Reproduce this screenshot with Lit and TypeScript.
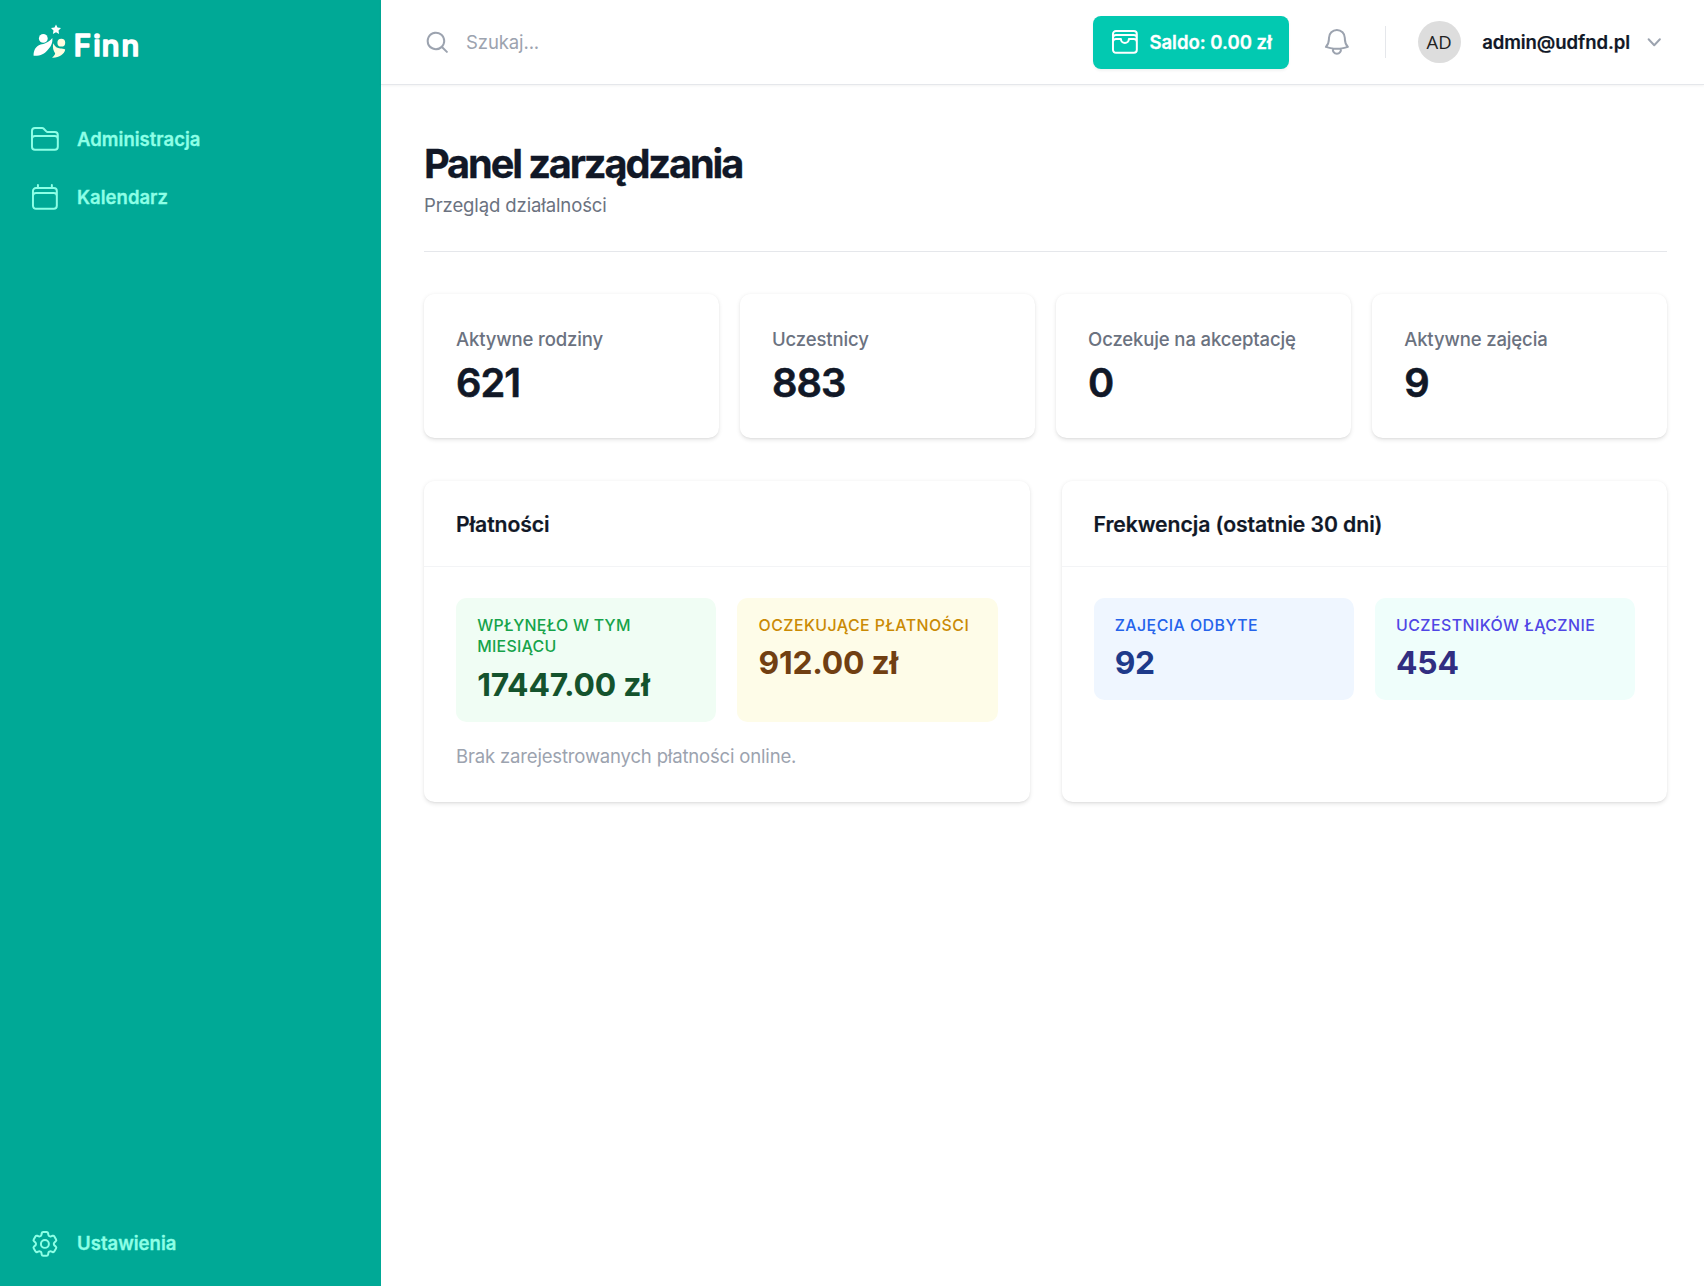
import { LitElement, html, css, svg } from "lit";
import { customElement } from "lit/decorators.js";

const outline = (d: string[], cls = "") => html`
  <svg class="icon ${cls}" viewBox="0 0 24 24" fill="none" stroke="currentColor" stroke-width="1.5"
    stroke-linecap="round" stroke-linejoin="round">${d.map((p) => svg`<path d=${p}></path>`)}</svg>`;

const mini = (d: string) => html`
  <svg class="mini" viewBox="0 0 20 20" fill="currentColor">
    <path fill-rule="evenodd" clip-rule="evenodd" d=${d}></path>
  </svg>`;

const FOLDER = ["M2.25 12.75V12A2.25 2.25 0 014.5 9.75h15A2.25 2.25 0 0121.75 12v.75m-8.69-6.44l-2.12-2.12a1.5 1.5 0 00-1.061-.44H4.5A2.25 2.25 0 002.25 6v12a2.25 2.25 0 002.25 2.25h15A2.25 2.25 0 0021.75 18V9a2.25 2.25 0 00-2.25-2.25h-5.379a1.5 1.5 0 01-1.06-.44z"];
const CALENDAR = ["M6.75 3v2.25M17.25 3v2.25M3 18.75V7.5a2.25 2.25 0 012.25-2.25h13.5A2.25 2.25 0 0121 7.5v11.25m-18 0A2.25 2.25 0 005.25 21h13.5A2.25 2.25 0 0021 18.75m-18 0v-7.5A2.25 2.25 0 015.25 9h13.5A2.25 2.25 0 0121 11.25v7.5"];
const COG = [
  "M9.594 3.94c.09-.542.56-.94 1.11-.94h2.593c.55 0 1.02.398 1.11.94l.213 1.281c.063.374.313.686.645.87.074.04.147.083.22.127.324.196.72.257 1.075.124l1.217-.456a1.125 1.125 0 011.37.49l1.296 2.247a1.125 1.125 0 01-.26 1.431l-1.003.827c-.293.24-.438.613-.431.992a6.759 6.759 0 010 .255c-.007.378.138.75.43.99l1.005.828c.424.35.534.954.26 1.43l-1.298 2.247a1.125 1.125 0 01-1.369.491l-1.217-.456c-.355-.133-.75-.072-1.076.124a6.57 6.57 0 01-.22.128c-.331.183-.581.495-.644.869l-.213 1.28c-.09.543-.56.941-1.11.941h-2.594c-.55 0-1.02-.398-1.11-.94l-.213-1.281c-.062-.374-.312-.686-.644-.87a6.52 6.52 0 01-.22-.127c-.325-.196-.72-.257-1.076-.124l-1.217.456a1.125 1.125 0 01-1.369-.49l-1.297-2.247a1.125 1.125 0 01.26-1.431l1.004-.827c.292-.24.437-.613.43-.992a6.932 6.932 0 010-.255c.007-.378-.138-.75-.43-.99l-1.004-.828a1.125 1.125 0 01-.26-1.43l1.297-2.247a1.125 1.125 0 011.37-.491l1.216.456c.356.133.751.072 1.076-.124.072-.044.146-.087.22-.128.332-.183.582-.495.644-.869l.214-1.281z",
  "M15 12a3 3 0 11-6 0 3 3 0 016 0z",
];
const WALLET = ["M21 12a2.25 2.25 0 00-2.25-2.25H15a3 3 0 11-6 0H5.25A2.25 2.25 0 003 12m18 0v6a2.25 2.25 0 01-2.25 2.25H5.25A2.25 2.25 0 013 18v-6m18 0V9M3 12V9m18 0a2.25 2.25 0 00-2.25-2.25H5.25A2.25 2.25 0 003 9m18 0V6a2.25 2.25 0 00-2.25-2.25H5.25A2.25 2.25 0 003 6v3"];
const BELL = ["M14.857 17.082a23.848 23.848 0 005.454-1.31A8.967 8.967 0 0118 9.75v-.7V9A6 6 0 006 9v.75a8.967 8.967 0 01-2.312 6.022c1.733.64 3.56 1.085 5.455 1.31m5.714 0a24.255 24.255 0 01-5.714 0m5.714 0a3 3 0 11-5.714 0"];
const SEARCH = "M9 3.5a5.5 5.5 0 100 11 5.5 5.5 0 000-11zM2 9a7 7 0 1112.452 4.391l3.328 3.329a.75.75 0 11-1.06 1.06l-3.329-3.328A7 7 0 012 9z";
const CHEVRON = "M5.23 7.21a.75.75 0 011.06.02L10 11.168l3.71-3.938a.75.75 0 111.08 1.04l-4.25 4.5a.75.75 0 01-1.08 0l-4.25-4.5a.75.75 0 01.02-1.06z";

const STATS = [
  ["Aktywne rodziny", "621"],
  ["Uczestnicy", "883"],
  ["Oczekuje na akceptację", "0"],
  ["Aktywne zajęcia", "9"],
];

const PANELS = [
  {
    title: "Płatności",
    tiles: [
      ["green", "Wpłynęło w tym miesiącu", "17447.00 zł"],
      ["yellow", "Oczekujące płatności", "912.00 zł"],
    ],
    note: "Brak zarejestrowanych płatności online.",
  },
  {
    title: "Frekwencja (ostatnie 30 dni)",
    tiles: [
      ["blue", "Zajęcia odbyte", "92"],
      ["mint", "Uczestników łącznie", "454"],
    ],
    note: "",
  },
];

@customElement("app-root")
export class AppRoot extends LitElement {
  static styles = css`
    :host {
      display: flex;
      height: 100vh;
      background: #fff;
      color: #111827;
      font-family: Inter, "Liberation Sans", sans-serif;
      font-size: 18.55px;
      line-height: 26.5px;
    }
    * { box-sizing: border-box; }
    svg { display: block; flex: none; }
    .icon { width: 31.8px; height: 31.8px; }
    .mini { width: 26.5px; height: 26.5px; color: #9ca3af; }

    .sidebar {
      width: 381px;
      flex: none;
      background: #00a996;
      color: #8dffe6;
      display: flex;
      flex-direction: column;
      padding: 0 29px 15.9px;
    }
    .brand { height: 112.5px; padding-top: 20px; }
    .logo { width: 120px; height: 44px; }
    .wordmark { font: 500 29.5px Inter, sans-serif; }
    .nav { flex: 1; display: flex; flex-direction: column; gap: 5.3px; }
    .item {
      display: flex;
      align-items: center;
      gap: 16.3px;
      height: 53px;
      font-weight: 600;
      -webkit-text-stroke: 0.3px currentColor;
    }

    .page { flex: 1; min-width: 0; display: flex; flex-direction: column; }
    .topbar {
      height: 85px;
      flex: none;
      display: flex;
      align-items: center;
      padding: 0 36.5px 0 43px;
      border-bottom: 1px solid #e5e7eb;
      box-shadow: 0 1.3px 2.6px rgba(0, 0, 0, 0.05);
    }
    .search {
      flex: 1;
      display: flex;
      align-items: center;
      gap: 15.5px;
      color: #9ca3af;
      letter-spacing: -0.12px;
    }
    .balance {
      display: flex;
      align-items: center;
      gap: 8.8px;
      height: 53px;
      width: 196px;
      padding-left: 16px;
      border-radius: 8px;
      background: #02c9b1;
      color: #fff;
      font-weight: 600;
      -webkit-text-stroke: 0.3px currentColor;
      box-shadow: 0 1.3px 2.6px rgba(0, 0, 0, 0.05);
      white-space: nowrap;
    }
    .bell { color: #9ca3af; margin-left: 32px; }
    .separator { width: 1px; height: 32px; background: #e5e7eb; margin: 0 32px; }
    .avatar {
      width: 43px;
      height: 42.4px;
      border-radius: 50%;
      background: #ddd;
      color: #222;
      display: grid;
      place-items: center;
      font: 18.5px "Open Sans", sans-serif;
    }
    .email {
      font-weight: 600;
      letter-spacing: -0.08px;
      margin-left: 21.6px;
      margin-right: 11px;
      white-space: nowrap;
      -webkit-text-stroke: 0.2px currentColor;
    }

    .content { padding: 52px 37px 0 43px; }
    .title {
      margin: 0;
      font-size: 39.75px;
      line-height: 53px;
      font-weight: 700;
      letter-spacing: -0.0535em;
      -webkit-text-stroke: 0.3px currentColor;
    }
    .subtitle { margin: 2px 0 0; color: #6b7280; letter-spacing: -0.12px; }
    .heading { height: 115px; border-bottom: 1px solid #e5e7eb; }
    .stats {
      display: grid;
      grid-template-columns: repeat(4, 1fr);
      gap: 21.2px;
      margin-top: 42px;
    }
    .card {
      background: #fff;
      border-radius: 10.6px;
      box-shadow: 0 1.3px 4px rgba(0, 0, 0, 0.1), 0 1.3px 2.6px -1.3px rgba(0, 0, 0, 0.1);
    }
    .stat { height: 144px; padding: 32px; }
    .stat-label { font-weight: 500; color: #6b7280; white-space: nowrap; letter-spacing: -0.14px; }
    .stat-value {
      font-size: 39.75px;
      line-height: 47.7px;
      font-weight: 600;
      letter-spacing: -0.025em;
      margin-top: 6.3px;
      -webkit-text-stroke: 0.6px currentColor;
    }
    .panels {
      display: grid;
      grid-template-columns: 1fr 1fr;
      gap: 32px;
      margin-top: 43px;
    }
    .panel { height: 321px; }
    .panel-title {
      margin: 0;
      height: 86px;
      padding: 1px 32px 0;
      display: flex;
      align-items: center;
      border-bottom: 1px solid #f3f4f6;
      font-size: 21.2px;
      font-weight: 600;
      letter-spacing: -0.08px;
      -webkit-text-stroke: 0.2px currentColor;
    }
    .panel-body { padding: 31px 32px; }
    .tiles { display: grid; grid-template-columns: 1fr 1fr; gap: 21.2px; }
    .tile { border-radius: 10.6px; padding: 16.6px 21.2px 15.4px; }
    .tile-label {
      font-size: 15.9px;
      line-height: 21.4px;
      font-weight: 500;
      letter-spacing: 0.45px;
      text-transform: uppercase;
    }
    .green .tile-label { letter-spacing: 0.28px; }
    .tile-value {
      font-size: 31.8px;
      line-height: 42.4px;
      font-weight: 700;
      margin-top: 6.4px;
      letter-spacing: -0.22px;
    }
    .green { background: #f0fdf4; color: #16a34a; }
    .green .tile-value { color: #14532d; }
    .yellow { background: #fefce8; color: #ca8a04; }
    .yellow .tile-value { color: #713f12; }
    .blue { background: #eff6ff; color: #2563eb; }
    .blue .tile-value { color: #1e3a8a; }
    .mint { background: #effefb; color: #4f46e5; }
    .mint .tile-value { color: #312e81; }
    .note { margin: 21px 0 0; color: #9ca3af; letter-spacing: -0.18px; }
  `;

  private logo() {
    return html`<svg class="logo" viewBox="29 20 120 44">
      <path fill="#fff" d="M56 24.6l1.5 3 3.5.5-2.5 2.4.6 3.5-3.1-1.7-3.1 1.7.6-3.5-2.5-2.4 3.5-.5z"></path>
      <circle cx="43.3" cy="38.4" r="4.4" fill="#fff"></circle>
      <path fill="#fff" d="M33.6 55.8c-.3-5 2-9.8 7-11.3 3.5-.8 7.6-1.8 11.7-6.6.6 5.3-1.6 8.8-4.6 12-3.2 4-7.2 6.2-14.1 5.9z"></path>
      <circle cx="61.3" cy="42.7" r="3.9" fill="#fffde0"></circle>
      <path fill="#fffde0" d="M53.3 43.3c1.5 3.6 4.2 5 7 5.3 1.6.2 3.4.2 4.9.8-.8 4.8-6.4 8.6-13.2 8.2 1.5-1.2 2.7-2.6 3.2-4.2-1.8-2.4-2.900-5.800-1.900-10.100z"></path>
      <text class="wordmark" x="73.700 93.300 101.700 121.400" y="55.500" fill="#fff" stroke="#fff"
        stroke-width="1.700" stroke-linejoin="round">Finn</text>
    </svg>`;
  }

  render() {
    return html`
      <aside class="sidebar">
        <div class="brand">${this.logo()}</div>
        <nav class="nav">
          <div class="item">${outline(FOLDER)}<span>Administracja</span></div>
          <div class="item">${outline(CALENDAR)}<span>Kalendarz</span></div>
        </nav>
        <div class="item">${outline(COG)}<span>Ustawienia</span></div>
      </aside>
      <div class="page">
        <header class="topbar">
          <div class="search">${mini(SEARCH)}<span>Szukaj...</span></div>
          <div class="balance">${outline(WALLET)}<span>Saldo: 0.00 zł</span></div>
          ${outline(BELL, "bell")}
          <div class="separator"></div>
          <div class="avatar">AD</div>
          <span class="email">admin@udfnd.pl</span>
          ${mini(CHEVRON)}
        </header>
        <main class="content">
          <div class="heading">
            <h1 class="title">Panel zarządzania</h1>
            <p class="subtitle">Przegląd działalności</p>
          </div>
          <section class="stats">
            ${STATS.map(([label, value]) => html`
              <div class="card stat">
                <div class="stat-label">${label}</div>
                <div class="stat-value">${value}</div>
              </div>`)}
          </section>
          <section class="panels">
            ${PANELS.map((p) => html`
              <div class="card panel">
                <h2 class="panel-title">${p.title}</h2>
                <div class="panel-body">
                  <div class="tiles">
                    ${p.tiles.map(([tone, label, value]) => html`
                      <div class="tile ${tone}">
                        <div class="tile-label">${label}</div>
                        <div class="tile-value">${value}</div>
                      </div>`)}
                  </div>
                  ${p.note ? html`<p class="note">${p.note}</p>` : ""}
                </div>
              </div>`)}
          </section>
        </main>
      </div>
    `;
  }
}
